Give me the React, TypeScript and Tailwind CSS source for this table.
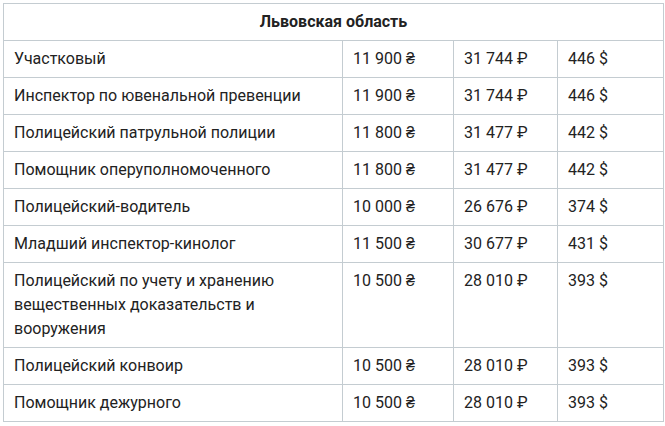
const rows: [string, string, string, string][] = [
  ['Участковый', '11 900 ₴', '31 744 ₽', '446 $'],
  ['Инспектор по ювенальной превенции', '11 900 ₴', '31 744 ₽', '446 $'],
  ['Полицейский патрульной полиции', '11 800 ₴', '31 477 ₽', '442 $'],
  ['Помощник оперуполномоченного', '11 800 ₴', '31 477 ₽', '442 $'],
  ['Полицейский-водитель', '10 000 ₴', '26 676 ₽', '374 $'],
  ['Младший инспектор-кинолог', '11 500 ₴', '30 677 ₽', '431 $'],
  ['Полицейский по учету и хранению вещественных доказательств и вооружения', '10 500 ₴', '28 010 ₽', '393 $'],
  ['Полицейский конвоир', '10 500 ₴', '28 010 ₽', '393 $'],
  ['Помощник дежурного', '10 500 ₴', '28 010 ₽', '393 $'],
];

const cell = 'border border-[#c4ccd1] px-[10px] py-[6px] align-top';

export default function App() {
  return (
    <div className="min-h-screen bg-white p-[3px] font-['Roboto',sans-serif] text-[16px] leading-6 text-[#222]">
      <table className="w-[660px] table-fixed border-collapse">
        <colgroup>
          <col className="w-[339px]" />
          <col className="w-[111px]" />
          <col className="w-[104px]" />
          <col className="w-[106px]" />
        </colgroup>
        <thead>
          <tr>
            <th colSpan={4} className={`${cell} text-center font-bold`}>
              Львовская область
            </th>
          </tr>
        </thead>
        <tbody>
          {rows.map(([title, uah, rub, usd]) => (
            <tr key={title}>
              <td className={cell}>{title}</td>
              <td className={cell}>{uah}</td>
              <td className={cell}>{rub}</td>
              <td className={cell}>{usd}</td>
            </tr>
          ))}
        </tbody>
      </table>
    </div>
  );
}
